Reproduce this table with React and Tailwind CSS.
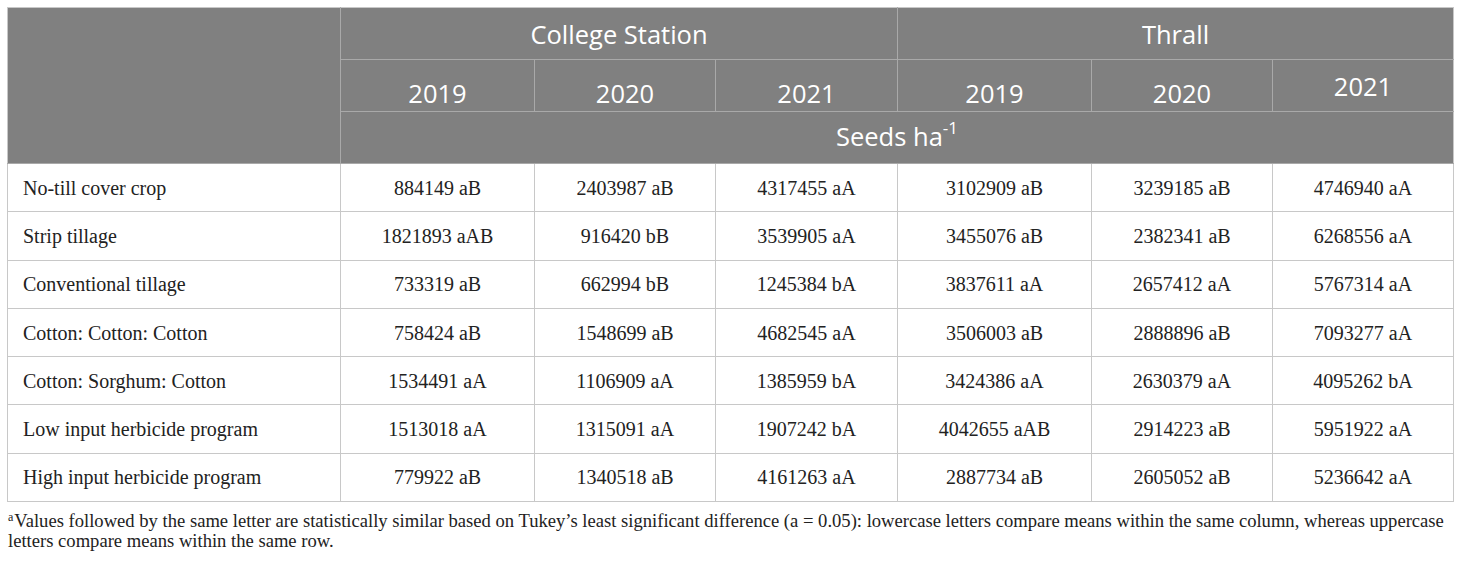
import React from 'react';

const rows = [
  ['No-till cover crop', '884149 aB', '2403987 aB', '4317455 aA', '3102909 aB', '3239185 aB', '4746940 aA'],
  ['Strip tillage', '1821893 aAB', '916420 bB', '3539905 aA', '3455076 aB', '2382341 aB', '6268556 aA'],
  ['Conventional tillage', '733319 aB', '662994 bB', '1245384 bA', '3837611 aA', '2657412 aA', '5767314 aA'],
  ['Cotton: Cotton: Cotton', '758424 aB', '1548699 aB', '4682545 aA', '3506003 aB', '2888896 aB', '7093277 aA'],
  ['Cotton: Sorghum: Cotton', '1534491 aA', '1106909 aA', '1385959 bA', '3424386 aA', '2630379 aA', '4095262 bA'],
  ['Low input herbicide program', '1513018 aA', '1315091 aA', '1907242 bA', '4042655 aAB', '2914223 aB', '5951922 aA'],
  ['High input herbicide program', '779922 aB', '1340518 aB', '4161263 aA', '2887734 aB', '2605052 aB', '5236642 aA'],
];

const head = "border border-[#a9a9a9] text-white font-normal";

export default function App() {
  return (
    <div className="bg-white w-[1460px] h-[563px] pt-[7px] pl-[7px]">
      <table className="table-fixed border-collapse w-[1446px]">
        <colgroup>
          <col className="w-[333px]" />
          <col className="w-[194px]" />
          <col className="w-[181px]" />
          <col className="w-[182px]" />
          <col className="w-[194px]" />
          <col className="w-[181px]" />
          <col className="w-[181px]" />
        </colgroup>
        <thead className="bg-[#808080] font-['Open_Sans',sans-serif] text-[25.5px] leading-[32px]">
          <tr className="h-[52px]">
            <th rowSpan={3} className={head + " border-l-[#c8c8c8] border-t-[#c8c8c8]"}></th>
            <th colSpan={3} className={head + " border-t-[#c8c8c8]"}>College Station</th>
            <th colSpan={3} className={head + " border-t-[#c8c8c8] border-r-[#c8c8c8]"}>Thrall</th>
          </tr>
          <tr className="h-[52px]">
            <th className={head + " pt-[15px]"}>2019</th>
            <th className={head + " pt-[15px]"}>2020</th>
            <th className={head + " pt-[15px]"}>2021</th>
            <th className={head + " pt-[15px]"}>2019</th>
            <th className={head + " pt-[15px]"}>2020</th>
            <th className={head + " border-r-[#c8c8c8]"}>2021</th>
          </tr>
          <tr className="h-[52px]">
            <th colSpan={6} className={head + " border-r-[#c8c8c8]"}>
              Seeds ha<span className="relative -top-[12px] text-[17px]">-1</span>
            </th>
          </tr>
        </thead>
        <tbody className="font-['Liberation_Serif',serif] text-[20px] leading-[28px] text-[#222]">
          {rows.map((r) => (
            <tr key={r[0]} className="h-[48.3px]">
              {r.map((c, i) => (
                <td
                  key={i}
                  className={
                    "border border-[#c8c8c8] " + (i === 0 ? "text-left pl-[15px]" : "text-center")
                  }
                >
                  {c}
                </td>
              ))}
            </tr>
          ))}
        </tbody>
      </table>
      <p className="mt-[9px] pl-[1px] w-[1448px] font-['Liberation_Serif',serif] text-[18.6px] leading-[20px] text-[#222]">
        <span className="align-top text-[12px] leading-[12px] mr-[1px]">a</span>Values followed by the same letter are statistically similar based on Tukey’s least significant difference (a = 0.05): lowercase letters compare means within the same column, whereas uppercase letters compare means within the same row.
      </p>
    </div>
  );
}
